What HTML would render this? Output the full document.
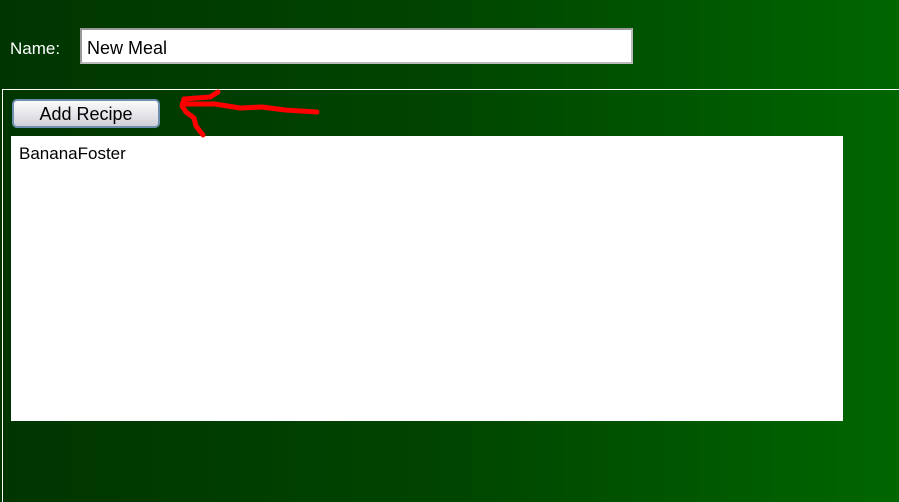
<!DOCTYPE html>
<html><head><style>
html,body{margin:0;width:899px;height:502px;overflow:hidden}
body{background:linear-gradient(to right,#003500 0%,#004500 50%,#006600 100%);font-family:"Liberation Sans",sans-serif;position:relative}
.lbl{position:absolute;left:10px;top:39px;color:#fff;font-size:17px}
.inp{position:absolute;left:80px;top:28px;width:553px;height:36px;background:#fff;border:2px solid #bbb;box-sizing:border-box;border-top-color:#999;border-left-color:#999;font-size:18px;padding:8px 0 0 5px}
.box{position:absolute;left:2px;top:89px;width:920px;height:420px;border:1px solid #fff;box-sizing:border-box}
.btn{position:absolute;left:12px;top:99px;width:148px;height:29px;box-sizing:border-box;border:2px solid #6e8fae;border-radius:5px;background:linear-gradient(#fafafa,#e4e4ea 55%,#d0d0d8);font-size:18px;text-align:center;line-height:26px}
.list{position:absolute;left:11px;top:136px;width:832px;height:285px;background:#fff;font-size:17px;padding:8px 0 0 8px;box-sizing:border-box}
</style></head><body>
<div class="lbl">Name:</div>
<div class="inp">New Meal</div>
<div class="box"></div>
<div class="btn">Add Recipe</div>
<div class="list">BananaFoster</div>
<svg style="position:absolute;left:0;top:0" width="899" height="502"><path d="M218 92 L210 97 L184 99 L182 106 L186 112 L194 118 L196 126 L203 135 M186 104 L215 104 L240 108 L262 107 L285 110 L317 112" stroke="#f00" stroke-width="5" fill="none" stroke-linecap="round" stroke-linejoin="round"/></svg>
</body></html>
